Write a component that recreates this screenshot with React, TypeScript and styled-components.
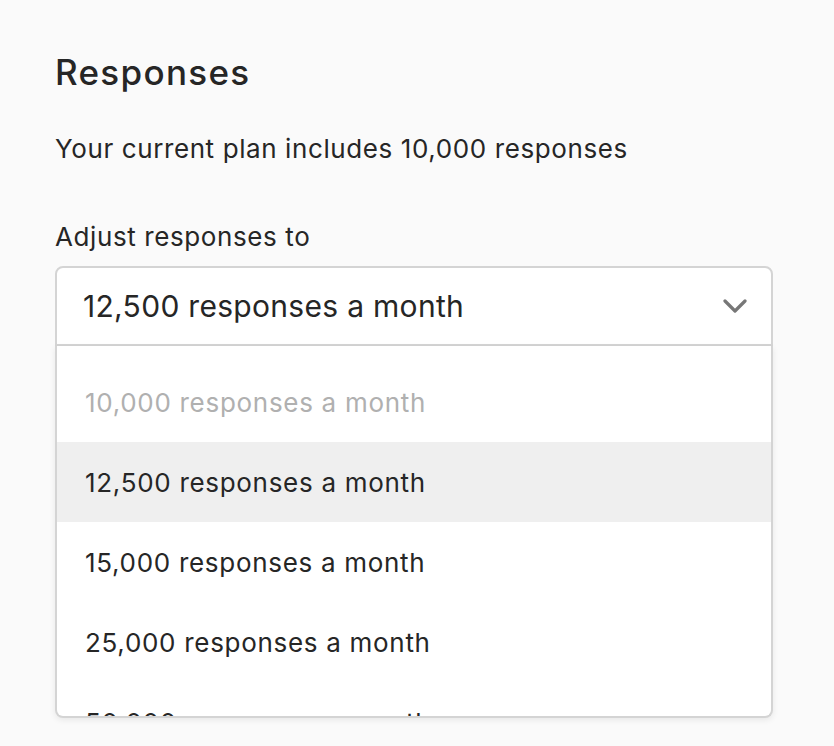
import React from 'react';
import styled, { createGlobalStyle } from 'styled-components';

const GlobalStyle = createGlobalStyle`
    html, body {
        margin: 0;
        padding: 0;
        background: #fafafa;
    }
    body {
        font-family: Inter, "Noto Sans", sans-serif;
        color: #262626;
        -webkit-font-smoothing: antialiased;
    }
`;

const options = [
    { label: '10,000 responses a month', disabled: true },
    { label: '12,500 responses a month', active: true },
    { label: '15,000 responses a month' },
    { label: '25,000 responses a month' },
    { label: '50,000 responses a month' },
];

export default function App() {
    return (
        <>
            <GlobalStyle />
            <Page>
                <Title>Responses</Title>
                <Text>Your current plan includes 10,000 responses</Text>
                <Label>Adjust responses to</Label>
                <Select>
                    <Trigger>
                        <Value>12,500 responses a month</Value>
                        <svg width="24" height="14" viewBox="0 0 24 14" fill="none">
                            <path d="M2 2l10 10L22 2" stroke="#777" strokeWidth="3.2" strokeLinecap="round" strokeLinejoin="round" />
                        </svg>
                    </Trigger>
                    <Menu>
                        {options.map((o) => (
                            <Option key={o.label} $disabled={o.disabled} $active={o.active}>
                                {o.label}
                            </Option>
                        ))}
                    </Menu>
                </Select>
            </Page>
        </>
    );
}

const Page = styled.div`
    height: 746px;
    overflow: hidden;
    padding: 50px 61px 0 55px;
    box-sizing: border-box;
`;

const Title = styled.h1`
    margin: 0;
    font-size: 35px;
    font-weight: 500;
    line-height: 44px;
    letter-spacing: 1.3px;
`;

const Text = styled.p`
    margin: 38px 0 0;
    font-size: 26px;
    line-height: 34px;
    letter-spacing: 0.6px;
`;

const Label = styled.div`
    margin-top: 54px;
    font-size: 26px;
    line-height: 34px;
    letter-spacing: 0.6px;
`;

const Select = styled.div`
    margin-top: 12px;
    width: 718px;
`;

const Trigger = styled.div`
    height: 80px;
    box-sizing: border-box;
    border: 2px solid #d4d4d4;
    border-radius: 8px 8px 0 0;
    background: #fff;
    display: flex;
    align-items: center;
    justify-content: space-between;
    padding: 0 24px 0 26px;
`;

const Value = styled.span`
    font-size: 30px;
    line-height: 1;
    letter-spacing: 0.3px;
`;

const Menu = styled.div`
    height: 372px;
    overflow: hidden;
    box-sizing: border-box;
    padding-top: 16px;
    background: #fff;
    border: 2px solid #d4d4d4;
    border-top: 0;
    border-radius: 0 0 8px 8px;
    box-shadow: 0 2px 6px rgba(0, 0, 0, 0.08);
`;

const Option = styled.div<{ $disabled?: boolean; $active?: boolean }>`
    height: 80px;
    flex-shrink: 0;
    display: flex;
    align-items: center;
    padding: 0 28px;
    font-size: 26px;
    letter-spacing: 0.7px;
    color: ${(p) => (p.$disabled ? '#b0b0b0' : '#262626')};
    background: ${(p) => (p.$active ? '#efefef' : 'transparent')};
`;
